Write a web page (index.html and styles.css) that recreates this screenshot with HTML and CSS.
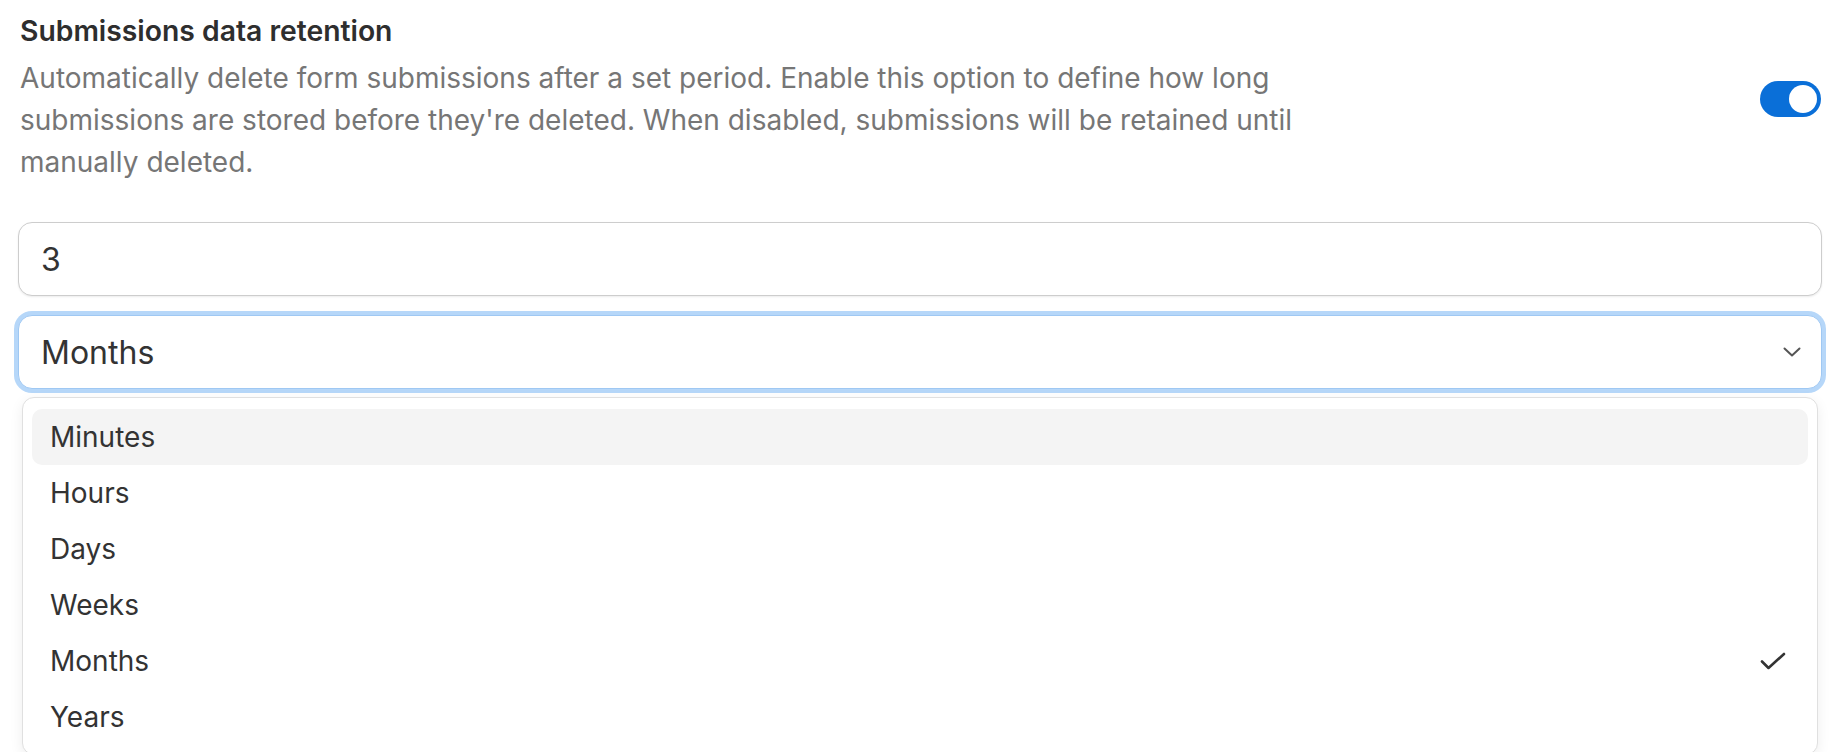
FILE: index.html
```html
<!DOCTYPE html>
<html lang="en">
<head>
<meta charset="utf-8">
<title>Submissions data retention</title>
<link rel="stylesheet" href="styles.css">
</head>
<body>
<div class="page">
  <div class="setting-head">
    <div class="setting-text">
      <div class="setting-title">Submissions data retention</div>
      <p class="setting-desc">Automatically delete form submissions after a set period. Enable this option to define how long submissions are stored before they're deleted. When disabled, submissions will be retained until manually deleted.</p>
    </div>
    <div class="toggle on"><span class="knob"></span></div>
  </div>

  <div class="field">
    <div class="input">3</div>
    <div class="select-wrap">
      <div class="select focused">
        <span class="select-value">Months</span>
        <svg class="chevron" width="18" height="10" viewBox="0 0 18 10"><path d="M1.5 1.5 L9 8.5 L16.5 1.5" fill="none" stroke="#555" stroke-width="2" stroke-linecap="round" stroke-linejoin="round"/></svg>
      </div>
      <div class="menu">
        <div class="option active">Minutes</div>
        <div class="option">Hours</div>
        <div class="option">Days</div>
        <div class="option">Weeks</div>
        <div class="option selected">Months
          <svg class="check" width="26" height="18" viewBox="0 0 26 18"><path d="M2 9.5 L8.5 16 L24 2" fill="none" stroke="#333" stroke-width="2.6" stroke-linecap="round" stroke-linejoin="round"/></svg>
        </div>
        <div class="option">Years</div>
      </div>
    </div>
  </div>
</div>
</body>
</html>
```

FILE: styles.css
```css
* { box-sizing: border-box; }
html, body { margin: 0; padding: 0; background: #fff; }
body {
  font-family: Inter, "Noto Sans", "Liberation Sans", sans-serif;
  color: #333;
  overflow: hidden;
}
.page {
  padding: 14px 26px 0 18px;
}
.setting-head {
  display: flex;
  align-items: center;
  justify-content: space-between;
}
.setting-text { max-width: 1340px; }
.setting-title {
  font-size: 28.3px;
  line-height: 34px;
  font-weight: 600;
  color: #2e2e2e;
  padding-left: 2px;
}
.setting-desc {
  margin: 9px 0 0;
  font-size: 28px;
  line-height: 42px;
  color: #767676;
  padding-left: 2px;
}
.toggle {
  width: 61px;
  height: 36px;
  border-radius: 18px;
  background: #0a6fd8;
  position: relative;
  flex-shrink: 0;
  margin-right: 1px;
}
.toggle .knob {
  position: absolute;
  top: 4px;
  right: 4px;
  width: 28px;
  height: 28px;
  border-radius: 50%;
  background: #fff;
}
.field {
  margin-top: 39px;
  display: flex;
  flex-direction: column;
  gap: 19px;
}
.input, .select {
  height: 74px;
  border: 1.5px solid #cdcdcd;
  border-radius: 14px;
  font-size: 32px;
  color: #333;
  display: flex;
  align-items: center;
  padding: 0 18px 0 22px;
  background: #fff;
}
.input {
  box-shadow: 0 1px 2px rgba(0,0,0,0.08);
}
.select {
  justify-content: space-between;
}
.select.focused {
  border-color: #9fc8f3;
  box-shadow: 0 0 0 4px #b6d7f9;
}
.chevron { margin-right: 2px; }
.menu {
  margin: 8px 4px 0;
  border: 1px solid #e0e0e0;
  border-radius: 12px;
  padding: 11px 9px 9px;
  background: #fff;
  box-shadow: 0 4px 14px rgba(0,0,0,0.07);
}
.option {
  height: 56px;
  display: flex;
  align-items: center;
  justify-content: space-between;
  padding: 0 22px 0 18px;
  font-size: 28px;
  color: #333;
  border-radius: 10px;
}
.option.active { background: #f4f4f4; }
```
